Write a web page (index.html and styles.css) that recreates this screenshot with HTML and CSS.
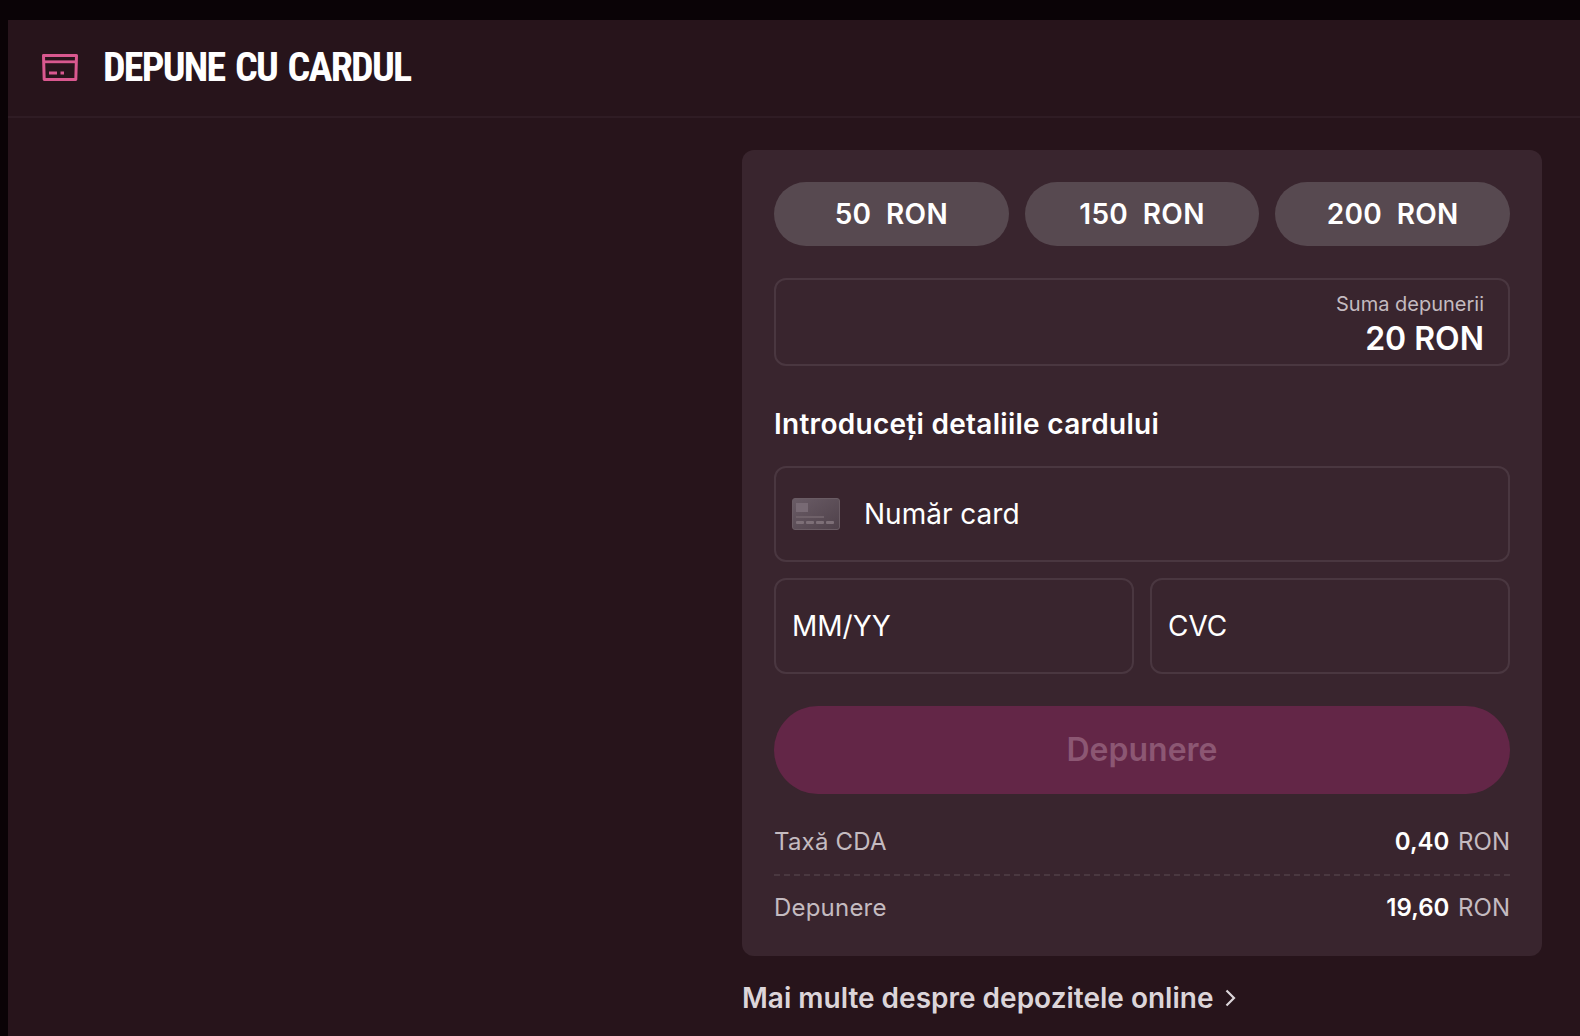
FILE: index.html
```html
<!DOCTYPE html>
<html lang="ro">
<head>
<meta charset="utf-8">
<title>Depune cu cardul</title>
<link rel="stylesheet" href="styles.css">
</head>
<body>
<main class="page">
  <header class="head">
    <svg class="head-icon" viewBox="0 0 36 28" width="36" height="28" fill="none" stroke="#d9588f" stroke-width="3" stroke-linejoin="round">
      <path d="M1.500 1.500H34.500L33.800 25.500H2.200Z"/>
      <path d="M2 7.800H34" stroke-width="2.800"/>
      <path d="M7 19H15M18.500 19H22" stroke-width="2.800"/>
    </svg>
    <h1 class="head-title">DEPUNE CU CARDUL</h1>
  </header>
  <div class="content">
    <section class="panel">
      <div class="pills">
        <button class="pill">50&nbsp; RON</button>
        <button class="pill">150&nbsp; RON</button>
        <button class="pill">200&nbsp; RON</button>
      </div>
      <div class="amount">
        <span class="amount-label">Suma depunerii</span>
        <span class="amount-value">20 RON</span>
      </div>
      <h2 class="subtitle">Introduceți detaliile cardului</h2>
      <div class="field field-card">
        <svg class="card-icon" viewBox="0 0 48 32" width="48" height="32">
          <defs>
            <linearGradient id="cardfill" x1="0" y1="0" x2="1" y2="1">
              <stop offset="0" stop-color="#6a5c66"/>
              <stop offset="1" stop-color="#4f414a"/>
            </linearGradient>
          </defs>
          <rect x="0.500" y="0.500" width="47" height="31" rx="2.500" fill="url(#cardfill)" stroke="#6a5c64"/>
          <rect x="4" y="5" width="12" height="9" fill="#786a74"/>
          <rect x="4" y="18" width="28" height="2" fill="#6f6169"/>
          <rect x="4" y="23" width="8" height="3" rx="1" fill="#7d6f77"/>
          <rect x="14" y="23" width="8" height="3" rx="1" fill="#7d6f77"/>
          <rect x="24" y="23" width="8" height="3" rx="1" fill="#7d6f77"/>
          <rect x="34" y="23" width="8" height="3" rx="1" fill="#7d6f77"/>
        </svg>
        <span>Număr card</span>
      </div>
      <div class="field-row">
        <div class="field">MM/YY</div>
        <div class="field">CVC</div>
      </div>
      <button class="submit">Depunere</button>
      <div class="summary">
        <div class="summary-row summary-first">
          <span class="summary-label">Taxă CDA</span>
          <span><b class="num">0,40</b> RON</span>
        </div>
        <div class="summary-row">
          <span class="summary-label">Depunere</span>
          <span><b class="num">19,60</b> RON</span>
        </div>
      </div>
    </section>
    <a class="more" href="#">Mai multe despre depozitele online
      <svg class="chev" viewBox="0 0 11 18" width="11" height="18" fill="none" stroke="#dcd5d9" stroke-width="2.200"><path d="M1.500 1.500L9 9L1.500 16.500"/></svg>
    </a>
  </div>
</main>
</body>
</html>
```
FILE: styles.css
```css
* { box-sizing: border-box; }
html, body { margin: 0; height: 100%; overflow: hidden; }
body {
  background: #0a0306;
  padding: 20px 0 0 8px;
  font-family: Inter, "Noto Sans", sans-serif;
  color: #fff;
}
.page { background: #27141b; height: 1016px; display: flex; flex-direction: column; }
.head {
  height: 98px;
  flex: none;
  display: flex;
  align-items: center;
  gap: 24px;
  padding: 0 0 1px 34px;
  border-bottom: 2px solid #2f1c24;
}
.head-title {
  margin: 0 0 0 1px;
  font-family: "Roboto", "Liberation Sans", sans-serif;
  font-stretch: 75%;
  font-weight: 700;
  font-size: 40px;
  letter-spacing: -1.750px;
  word-spacing: 3px;
  line-height: 1;
}
.content {
  padding: 32px 38px 0 0;
  display: flex;
  flex-direction: column;
  align-items: flex-end;
}
.panel {
  width: 800px;
  height: 806px;
  background: #39252e;
  border-radius: 12px;
  padding: 32px;
}
.pills { display: flex; gap: 16px; }
.pill {
  flex: 1;
  height: 64px;
  border: 0;
  border-radius: 32px;
  background: #574950;
  color: #fff;
  font: 600 28px Inter, sans-serif;
  letter-spacing: 0.3px;
}
.amount {
  margin-top: 32px;
  height: 88px;
  border: 2px solid #4a3740;
  border-radius: 12px;
  padding: 12px 24px 0;
  display: flex;
  flex-direction: column;
  align-items: flex-end;
}
.amount-label { font-size: 20px; line-height: 24px; color: #c4bbc0; }
.amount-value { font-size: 32px; line-height: 46px; font-weight: 600; }
.subtitle { margin: 40px 0 24px; font-size: 28px; line-height: 36px; font-weight: 600; letter-spacing: 0.28px; }
.field {
  height: 96px;
  flex: 1;
  border: 2px solid #4a3740;
  border-radius: 12px;
  padding: 0 16px;
  display: flex;
  align-items: center;
  font-size: 28px;
}
.field-card { gap: 24px; }
.card-icon { flex: none; }
.field-row { display: flex; gap: 16px; margin-top: 16px; }
.submit {
  display: block;
  width: 100%;
  height: 88px;
  margin-top: 32px;
  border: 0;
  border-radius: 44px;
  padding-bottom: 2px;
  background: #632647;
  color: #8c5773;
  font: 600 32px Inter, sans-serif;
}
.summary { margin-top: 32px; font-size: 24px; color: #c4bbc0; }
.summary-row { display: flex; justify-content: space-between; align-items: center; height: 32px; }
.summary-label { letter-spacing: 0.2px; }
.summary-first { height: 50px; padding-bottom: 18px; border-bottom: 2px dashed #4a3840; margin-bottom: 15px; }
.num { font-weight: 600; color: #fff; margin-right: 2px; }
.more {
  width: 800px;
  margin-top: 24px;
  display: flex;
  align-items: center;
  gap: 12px;
  color: #dcd5d9;
  font-size: 28px;
  line-height: 36px;
  font-weight: 600;
  text-decoration: none;
}
```
